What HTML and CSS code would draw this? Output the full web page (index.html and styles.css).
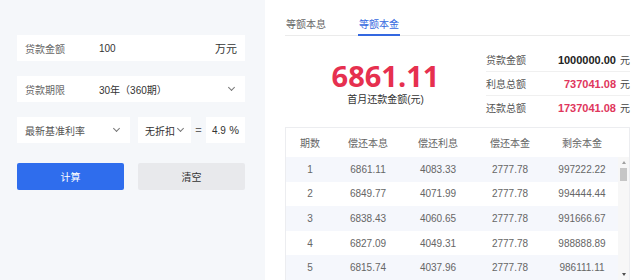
FILE: index.html
```html
<!DOCTYPE html>
<html lang="zh-CN">
<head>
    <meta charset="UTF-8">
    <meta name="viewport" content="width=device-width, initial-scale=1.0">
    <title>房贷计算器</title>
    <link rel="stylesheet" href="styles.css">
</head>
<body>
    <div class="side">
        <div class="field">
            <span class="field-label">贷款金额</span>
            <span class="field-value">100</span>
            <span class="field-unit">万元</span>
        </div>

        <div class="field">
            <span class="field-label">贷款期限</span>
            <span class="field-value">30年（360期）</span>
            <span class="chevron"></span>
        </div>

        <div class="rate-row">
            <div class="field rate-base">
                <span class="field-value muted">最新基准利率</span>
                <span class="chevron"></span>
            </div>
            <div class="field rate-discount">
                <span class="field-value">无折扣</span>
                <span class="chevron"></span>
            </div>
            <span class="equals">=</span>
            <div class="field rate-value">
                <span class="field-value">4.9</span>
                <span class="field-unit">%</span>
            </div>
        </div>

        <div class="actions">
            <button class="btn btn-primary">计算</button>
            <button class="btn btn-plain">清空</button>
        </div>
    </div>

    <div class="main">
        <div class="tabs">
            <span class="tab">等额本息</span>
            <span class="tab active">等额本金</span>
        </div>

        <div class="hero">
            <div class="first-month">
                <div class="big-number">6861.11</div>
                <div class="big-caption">首月还款金额(元)</div>
            </div>
            <div class="summary">
                <div class="summary-row">
                    <span class="summary-label">贷款金额</span>
                    <span><b class="summary-value">1000000.00</b><span class="unit">元</span></span>
                </div>
                <div class="summary-row">
                    <span class="summary-label">利息总额</span>
                    <span><b class="summary-value red">737041.08</b><span class="unit">元</span></span>
                </div>
                <div class="summary-row">
                    <span class="summary-label">还款总额</span>
                    <span><b class="summary-value red">1737041.08</b><span class="unit">元</span></span>
                </div>
            </div>
        </div>

        <div class="table">
            <div class="table-head">
                <span class="col c1">期数</span>
                <span class="col c2">偿还本息</span>
                <span class="col c3">偿还利息</span>
                <span class="col c4">偿还本金</span>
                <span class="col c5">剩余本金</span>
            </div>
            <div class="table-body">
                <div class="rows">
                    <div class="row">
                        <span class="col c1">1</span>
                        <span class="col c2">6861.11</span>
                        <span class="col c3">4083.33</span>
                        <span class="col c4">2777.78</span>
                        <span class="col c5">997222.22</span>
                    </div>
                    <div class="row">
                        <span class="col c1">2</span>
                        <span class="col c2">6849.77</span>
                        <span class="col c3">4071.99</span>
                        <span class="col c4">2777.78</span>
                        <span class="col c5">994444.44</span>
                    </div>
                    <div class="row">
                        <span class="col c1">3</span>
                        <span class="col c2">6838.43</span>
                        <span class="col c3">4060.65</span>
                        <span class="col c4">2777.78</span>
                        <span class="col c5">991666.67</span>
                    </div>
                    <div class="row">
                        <span class="col c1">4</span>
                        <span class="col c2">6827.09</span>
                        <span class="col c3">4049.31</span>
                        <span class="col c4">2777.78</span>
                        <span class="col c5">988888.89</span>
                    </div>
                    <div class="row">
                        <span class="col c1">5</span>
                        <span class="col c2">6815.74</span>
                        <span class="col c3">4037.96</span>
                        <span class="col c4">2777.78</span>
                        <span class="col c5">986111.11</span>
                    </div>
                </div>
                <div class="scrollbar">
                    <span class="arrow up"></span>
                    <span class="thumb"></span>
                    <span class="arrow down"></span>
                </div>
            </div>
        </div>
    </div>
</body>
</html>
```

FILE: styles.css
```css
body {
    margin: 0;
    width: 640px;
    height: 280px;
    overflow: hidden;
    display: flex;
    font-family: 'Liberation Sans', 'Noto Sans CJK SC', sans-serif;
    font-size: 10px;
    color: #333;
    background-color: #fff;
}

/* left form */
.side {
    width: 265px;
    flex-shrink: 0;
    box-sizing: border-box;
    padding: 35px 20px 0 17px;
    background-color: #f5f7fa;
}

.field {
    height: 26px;
    display: flex;
    align-items: center;
    padding: 0 8px;
    background-color: #fff;
    margin-bottom: 15px;
}

.field-label {
    width: 74px;
    color: #666;
}

.field-value {
    flex: 1;
    color: #333;
}

.field-value.muted {
    color: #555;
}

.field-unit {
    color: #333;
    font-size: 11px;
}

.chevron {
    width: 4px;
    height: 4px;
    border-right: 1px solid #777;
    border-bottom: 1px solid #777;
    transform: rotate(45deg);
    margin: 0 3px 3px 0;
}

.rate-row {
    display: flex;
    align-items: flex-start;
}

.rate-row .field {
    margin-bottom: 0;
}

.rate-base {
    width: 113px;
    box-sizing: border-box;
    margin-right: 8px;
}

.rate-discount {
    width: 53px;
    box-sizing: border-box;
    padding: 0 5px 0 7px;
}

.equals {
    width: 15px;
    line-height: 26px;
    text-align: center;
    color: #666;
    font-size: 11px;
}

.rate-value {
    width: 39px;
    box-sizing: border-box;
    padding: 0 6px;
}

.actions {
    display: flex;
    justify-content: space-between;
    margin-top: 20px;
}

.btn {
    width: 107px;
    height: 27px;
    border: none;
    border-radius: 2px;
    font-family: inherit;
    font-size: 10px;
    padding: 0;
}

.btn-primary {
    background-color: #2f6ded;
    color: #fff;
}

.btn-plain {
    background-color: #e8e9ec;
    color: #333;
}

/* right results */
.main {
    flex: 1;
    padding: 0 10px 0 20px;
}

.tabs {
    display: flex;
    align-items: flex-end;
    height: 36px;
    box-sizing: border-box;
    border-bottom: 1px solid #ebebeb;
}

.tab {
    line-height: 12px;
    padding: 0 1px 3px;
    margin-right: 31px;
    margin-bottom: -1px;
    color: #666;
    border-bottom: 2px solid transparent;
}

.tab.active {
    color: #3468e0;
    border-bottom-color: #3468e0;
}

.hero {
    display: flex;
    height: 91px;
}

.first-month {
    flex: 1;
    text-align: center;
    padding-top: 25px;
}

.big-number {
    font-family: 'Open Sans', 'Liberation Sans', sans-serif;
    font-weight: 700;
    font-size: 29px;
    line-height: 30px;
    color: #e6304f;
}

.big-caption {
    margin-top: 2px;
    line-height: 14px;
    color: #333;
}

.summary {
    width: 144px;
    margin-top: 12px;
}

.summary-row {
    height: 23px;
    display: flex;
    align-items: center;
    justify-content: space-between;
    border-bottom: 1px solid #f0f0f0;
}

.summary-row:last-child {
    border-bottom: none;
}

.summary-label {
    color: #555;
}

.summary-value {
    font-size: 11px;
    color: #222;
}

.summary-value.red {
    color: #e0365c;
}

.unit {
    margin-left: 4px;
    color: #444;
}

.table {
    border: 1px solid #ecedf0;
    border-bottom: none;
}

.table-head {
    display: flex;
    height: 29px;
    align-items: center;
    padding-right: 11px;
    color: #666;
}

.table-body {
    display: flex;
}

.rows {
    flex: 1;
}

.row {
    display: flex;
    align-items: center;
    height: 24.6px;
    color: #666;
}

.row:nth-child(odd) {
    background-color: #f5f7fc;
}

.col {
    text-align: center;
}

.c1 { width: 48px; }
.c2 { width: 68px; }
.c3 { width: 72px; }
.c4 { width: 72px; }
.c5 { width: 72px; }

.scrollbar {
    width: 11px;
    display: flex;
    flex-direction: column;
    align-items: center;
    background-color: #f7f7f7;
}

.arrow {
    width: 0;
    height: 0;
    border-left: 2px solid transparent;
    border-right: 2px solid transparent;
}

.arrow.up {
    margin-top: 4px;
    border-bottom: 3px solid #a0a0a0;
}

.arrow.down {
    margin-top: auto;
    margin-bottom: 4px;
    border-top: 3px solid #505050;
}

.thumb {
    width: 7px;
    height: 13px;
    margin-top: 4px;
    background-color: #c6c6c6;
}
```
